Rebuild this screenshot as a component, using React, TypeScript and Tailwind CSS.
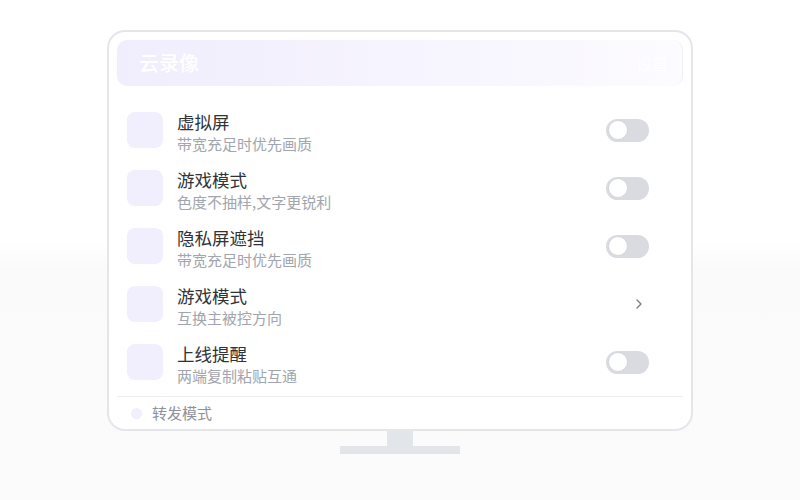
import React from "react";

type Row = { title: string; desc: string; kind: "toggle" | "arrow" };

const rows: Row[] = [
    { title: "虚拟屏", desc: "带宽充足时优先画质", kind: "toggle" },
    { title: "游戏模式", desc: "色度不抽样,文字更锐利", kind: "toggle" },
    { title: "隐私屏遮挡", desc: "带宽充足时优先画质", kind: "toggle" },
    { title: "游戏模式", desc: "互换主被控方向", kind: "arrow" },
    { title: "上线提醒", desc: "两端复制粘贴互通", kind: "toggle" },
];

const Toggle = () => (
    <div className="w-[43px] h-[23px] rounded-full bg-[#d9dbe0] flex items-center px-[1.5px]">
        <div className="w-[20px] h-[20px] rounded-full bg-white border border-[#d3d6dc]" />
    </div>
);

const Arrow = () => (
    <svg width="8" height="12" viewBox="0 0 8 12" className="mr-[6px]">
        <path d="M2 2 L6 6 L2 10" fill="none" stroke="#7b808a" strokeWidth="1.4" strokeLinecap="round" strokeLinejoin="round" />
    </svg>
);

export default function App() {
    return (
        <div
            className="w-[800px] h-[500px] flex flex-col items-center pt-[30px] bg-[linear-gradient(180deg,#ffffff_0%,#ffffff_48%,#fafafb_54%,#fbfbfc_100%)]"
            style={{ fontFamily: '"Noto Sans CJK SC", "Noto Sans", sans-serif' }}
        >
            {/* 屏幕 */}
            <div className="w-[586px] h-[401px] border-2 border-[#e4e6ea] rounded-[18px] bg-white px-[8px] pt-[8px] flex flex-col">
                <div className="h-[46px] rounded-[10px] bg-[linear-gradient(90deg,#f0edfd_0%,#f6f4fe_50%,#fcfbff_100%)] flex items-center justify-between pl-[22px] pr-[14px] border-r border-[#f0f0f4]">
                    <span className="text-[20px] font-medium text-white">云录像</span>
                    <span className="text-[16px] text-white/80">设置</span>
                </div>

                <div className="mt-[15px] flex flex-col">
                    {rows.map((row, i) => (
                        <div key={i} className="h-[58px] flex items-center pl-[10px] pr-[34px]">
                            <div className="w-[36px] h-[36px] rounded-[8px] bg-[#f1eefd]" />
                            <div className="ml-[14px] flex-1 flex flex-col pt-[6px]">
                                <span className="text-[17.5px] leading-[22px] text-[#303236]">{row.title}</span>
                                <span className="text-[15px] leading-[22px] text-[#a1a5ad]">{row.desc}</span>
                            </div>
                            {row.kind === "toggle" ? <Toggle /> : <Arrow />}
                        </div>
                    ))}
                </div>

                <div className="mt-[5px] h-px bg-[#eceef2]" />

                <div className="flex-1 flex items-center pl-[14px]">
                    <div className="w-[11px] h-[11px] rounded-full bg-[#f1eefd]" />
                    <span className="ml-[10px] text-[15px] text-[#8d9199]">转发模式</span>
                </div>
            </div>

            {/* 底座 */}
            <div className="w-[26px] h-[15px] bg-[#e2e5e9]" />
            <div className="w-[120px] h-[8px] bg-[#e2e5e9]" />
        </div>
    );
}
